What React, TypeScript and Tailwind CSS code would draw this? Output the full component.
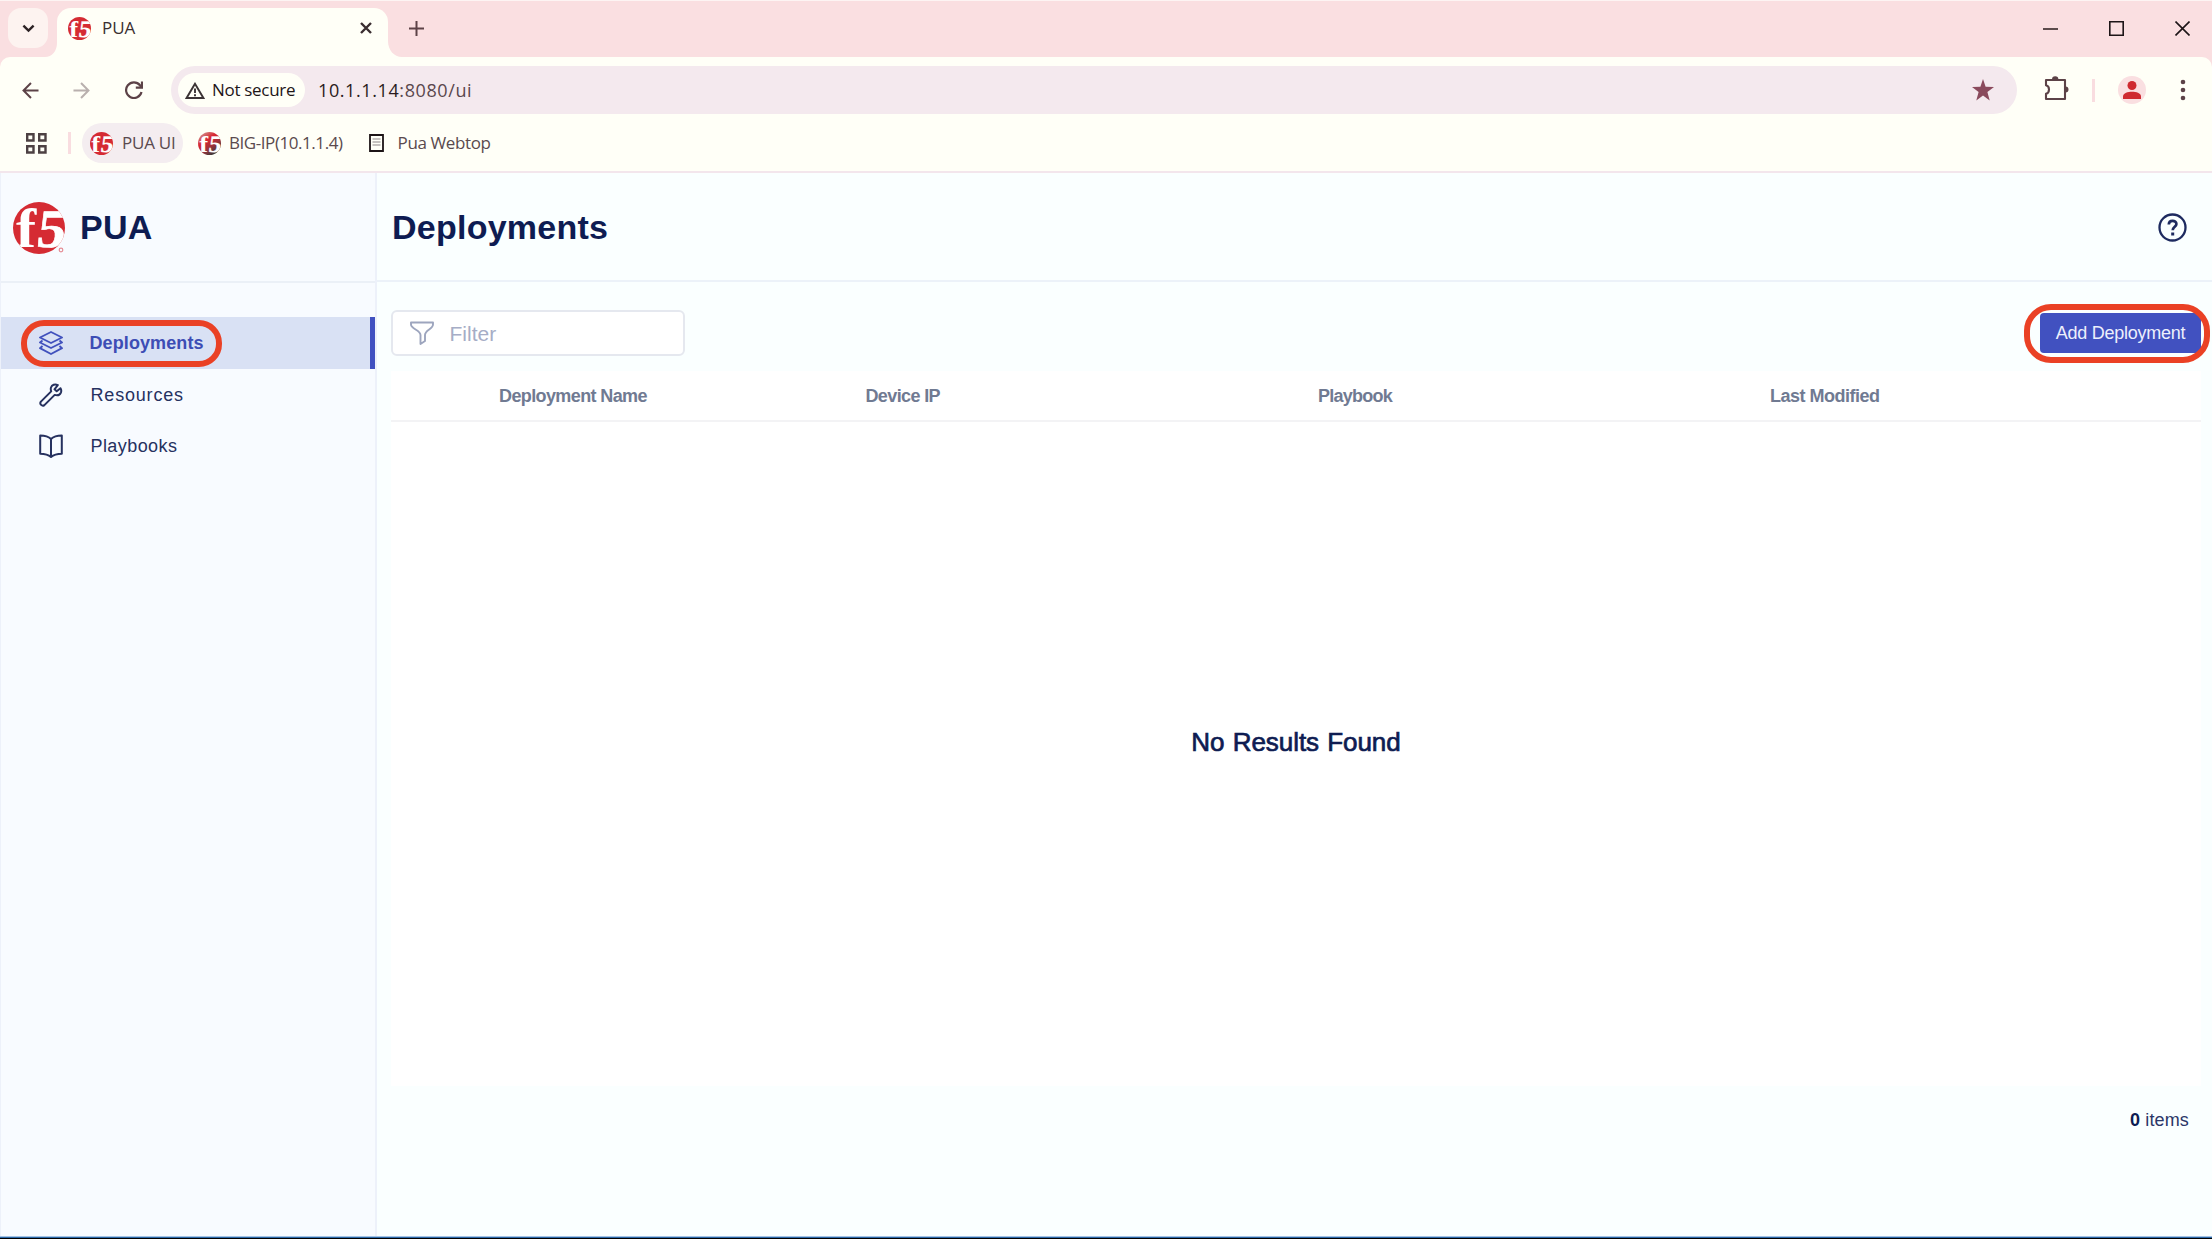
import React from "react";

function F5Logo({ size, shaded = false, mark = false }: { size: number; shaded?: boolean; mark?: boolean }) {
  const id = shaded ? "f5-shaded" : "f5-plain";
  return (
    <svg width={size} height={size} viewBox="0 0 52 52" className="shrink-0 overflow-visible">
      <defs>
        <linearGradient id={id} x1="0.15" y1="0" x2="0.85" y2="1">
          <stop offset="0" stopColor={shaded ? "#cf9a96" : "#d52b33"} />
          <stop offset="0.35" stopColor={shaded ? "#d9242f" : "#d52b33"} />
          <stop offset="0.6" stopColor={shaded ? "#a3323a" : "#d52b33"} />
          <stop offset="0.9" stopColor={shaded ? "#3a3a3a" : "#d52b33"} />
        </linearGradient>
        <clipPath id={id + "-clip"}>
          <circle cx="26" cy="26" r="26" />
        </clipPath>
      </defs>
      <circle cx="26" cy="26" r="26" fill={`url(#${id})`} />
      <g clipPath={`url(#${id}-clip)`} fill="#fff" fontFamily="Liberation Serif, serif" fontWeight="700" fontSize="54">
        <text transform="translate(3 44.500) scale(1.120 1)">f</text>
        <text transform="translate(22.500 44.500) skewX(-7) scale(1.060 1)" stroke="#fff" strokeWidth="0.6">5</text>
      </g>
      {mark && <circle cx="48" cy="48" r="1.8" fill="none" stroke="#e58c95" strokeWidth="1.2" />}
    </svg>
  );
}

function TabStrip() {
  return (
    <div className="flex h-[57px] items-start border-t border-[#fdf4f3] bg-[#fadfe1]">
      <div className="mt-[7px] ml-2 flex h-10 w-10 items-center justify-center rounded-[13px] bg-[#fdf3f0]">
        <svg width="13" height="9" viewBox="0 0 14 9" fill="none" stroke="#2c2224" strokeWidth="2.6">
          <path d="M1.500 1.500 7 6.800l5.500-5.300" />
        </svg>
      </div>
      <div className="relative mt-[7px] ml-[9px] flex h-[49px] w-[331px] items-start rounded-t-[14px] bg-[#fffff7] pt-2">
        <svg className="absolute bottom-0 -left-3" width="12" height="14" viewBox="0 0 12 14">
          <path d="M12 0v14H0C7 14 12 8 12 0z" fill="#fffff7" />
        </svg>
        <svg className="absolute -right-[14px] bottom-0" width="14" height="16" viewBox="0 0 14 16">
          <path d="M0 0v16h14C6 16 0 9 0 0z" fill="#fffff7" />
        </svg>
        <div className="ml-[11px] flex h-6 w-[279px] items-center">
          <F5Logo size={23} />
          <span className="ml-[11px] text-[17px] leading-6 text-[#3a2f31]">PUA</span>
        </div>
        <svg className="mt-[6px] ml-[13px]" width="12" height="12" viewBox="0 0 12 12" fill="none" stroke="#3a2d30" strokeWidth="2.4">
          <path d="m1 1 10 10M11 1 1 11" />
        </svg>
      </div>
      <svg className="mt-5 ml-[21px]" width="15" height="15" viewBox="0 0 15 15" fill="none" stroke="#5c4247" strokeWidth="2">
        <path d="M7.500 0v15M0 7.500h15" />
      </svg>
      <div className="mt-5 mr-[22px] ml-auto flex items-center gap-[51px]">
        <svg width="15" height="15" viewBox="0 0 15 15" stroke="#4a3a3c" strokeWidth="1.8">
          <path d="M0 8h15" />
        </svg>
        <svg width="15" height="15" viewBox="0 0 15 15" fill="none" stroke="#1d1517" strokeWidth="1.600">
          <path d="M.8.8h13.400v13.400H.8z" />
        </svg>
        <svg width="15" height="15" viewBox="0 0 15 15" fill="none" stroke="#1d1517" strokeWidth="1.600">
          <path d="m.5.5 14 14M14.500.5l-14 14" />
        </svg>
      </div>
    </div>
  );
}

function Toolbar() {
  return (
    <div className="bg-[#fadfe1]">
      <div className="flex h-[66px] items-center rounded-t-[10px] bg-[#fffff7]">
        <svg className="ml-[22px]" width="17" height="17" viewBox="0 0 18 18" fill="none" stroke="#5c4247" strokeWidth="2.1">
          <path d="M17.500 9H2M9.500 1 1.600 9l7.900 8" />
        </svg>
        <svg className="ml-[34px]" width="17" height="17" viewBox="0 0 18 18" fill="none" stroke="#b9b0ae" strokeWidth="2.1">
          <path d="M.5 9H16M8.500 1l7.900 8-7.900 8" />
        </svg>
        <svg className="ml-[35px]" width="18" height="18" viewBox="0 0 18 18" fill="none" stroke="#5c4247" strokeWidth="2.2">
          <path d="M16.500 11A7.800 7.800 0 1 1 15 4.300L16.800 6M17 .5v6.200h-6.200" />
        </svg>
        <div className="ml-[28px] flex h-12 w-[1846px] items-center rounded-full bg-[#f4e9ee] pl-[7px]">
          <div className="flex h-[34px] w-[127px] items-center rounded-full bg-[#fffff7] pl-[7px]">
            <svg width="20" height="17" viewBox="0 0 20 17" fill="none" stroke="#3b3335" strokeWidth="1.900">
              <path d="M10 1.800 1.600 16h16.800z" />
              <path d="M10 6.500v4.500M10 12.300v2" />
            </svg>
            <span className="ml-[7px] text-[17px] tracking-[-0.3px] whitespace-nowrap text-[#1d1517]">Not secure</span>
          </div>
          <span className="ml-[13px] text-[18px] tracking-[0.6px] text-[#5a474d]">
            <span className="text-[#2a1b20]">10.1.1.14</span>:8080/ui
          </span>
          <svg className="mr-[23px] ml-auto" width="22" height="22" viewBox="0 0 22 22" fill="#8a4a5c">
            <path d="m11 0 2.600 7.700 8.400.2-6.600 5.100L17.700 21.500 11 16.600 4.300 21.500 6.600 13 0 7.900l8.400-.2z" />
          </svg>
        </div>
        <svg className="mb-[3px] ml-[27px]" width="25" height="25" viewBox="0 0 25 25" fill="none" stroke="#5c4247" strokeWidth="2.100" strokeLinejoin="round">
          <path d="M2 4h19v19H2v-5.200c4-1 4-7.600 0-8.600z" />
          <path d="M8 3.500a3.200 3.200 0 0 1 6.400 0zM21.500 10.500a3 3 0 0 1 0 6z" fill="#5c4247" stroke="none" />
        </svg>
        <div className="ml-[23px] h-[23px] w-[2.500px] bg-[#f9dde0]" />
        <div className="ml-[23px] flex h-7 w-7 items-center justify-center rounded-full bg-[#fadfe1]">
          <svg width="18" height="18" viewBox="0 0 18 18" fill="#cf2a30">
            <circle cx="9" cy="4.500" r="4.500" />
            <path d="M0 18v-2.500C0 12 5 10.700 9 10.700s9 1.300 9 4.800V18z" />
          </svg>
        </div>
        <svg className="ml-[34px]" width="6" height="22" viewBox="0 0 6 22" fill="#5c4247">
          <circle cx="3" cy="3" r="2.300" />
          <circle cx="3" cy="11" r="2.300" />
          <circle cx="3" cy="19" r="2.300" />
        </svg>
      </div>
    </div>
  );
}

function Bookmarks() {
  return (
    <div className="flex h-[50px] items-start border-b-2 border-[#f3e6ec] bg-[#fffff7] text-[17px] leading-none text-[#5a4a4e]">
      <div className="flex h-10 items-center">
        <svg className="ml-[26px]" width="21" height="21" viewBox="0 0 21 21" fill="none" stroke="#4d4143" strokeWidth="2.400">
          <path d="M1.200 1.200h6.300v6.300H1.200zM13.200 1.200h6.300v6.300h-6.300zM1.200 13.200h6.300v6.300H1.200zM13.200 13.200h6.300v6.300h-6.300z" />
        </svg>
        <div className="ml-[21px] h-[22px] w-[2.500px] bg-[#f9dde0]" />
        <div className="ml-[11.500px] flex h-10 w-[101px] items-center rounded-full bg-[#f4edf0] pl-2">
          <F5Logo size={23} />
          <span className="ml-[9px] pb-[2px] tracking-[-0.24px] whitespace-nowrap">PUA UI</span>
        </div>
        <div className="ml-[14.500px] flex items-center">
          <F5Logo size={23} shaded />
          <span className="ml-[8.500px] pb-[2px] tracking-[-0.44px] whitespace-nowrap">BIG-IP(10.1.1.4)</span>
        </div>
        <svg className="ml-[26px]" width="15" height="18" viewBox="0 0 15 18" fill="none">
          <path d="M1 1h13v16H1z" stroke="#1c1416" strokeWidth="1.800" />
          <path d="M3.500 5h8M3.500 8h8M3.500 11h8" stroke="#8d8687" strokeWidth="1.100" />
        </svg>
        <span className="ml-[14px] pb-[2px] tracking-[-0.38px] whitespace-nowrap">Pua Webtop</span>
      </div>
    </div>
  );
}

const navItems = [
  {
    label: "Resources",
    tracking: "tracking-[0.81px]",
    icon: (
      <path d="M21.500 5.200 17.700 8.300 15.500 6.300l3.300-4.200C16 .8 12.900 1.800 12 4.500c-.5 1.500-.2 2.800.2 3.900L1.900 18.600a2.500 2.500 0 0 0 3.500 3.500L15.700 11.900c2.800.9 5.300-.2 6.200-2.300.6-1.500.4-3-.4-4.400z" />
    ),
  },
  {
    label: "Playbooks",
    tracking: "tracking-[0.43px]",
    icon: <path d="M12 5C9.500 2.500 6 1.500 1.200 1.500v18.200c4.500 0 8 .8 10.800 3.300 2.800-2.500 6.300-3.300 10.800-3.300V1.500C18 1.500 14.500 2.500 12 5zM12 5v18" />,
  },
];

function Sidebar() {
  return (
    <aside className="flex w-[377px] shrink-0 flex-col border-r-2 border-l border-[#edf1fa] bg-[#f8fbff]">
      <div className="flex h-[110px] items-center border-b-2 border-[#ebf0f7] pl-3">
        <div className="pt-[2px]">
          <F5Logo size={52} mark />
        </div>
        <h1 className="ml-[15px] text-[34px] leading-none font-bold tracking-[0.2px] text-[#0e1c52]">PUA</h1>
      </div>
      <nav className="mt-[34px] text-[18px] leading-none text-[#26315f]">
        <div className="relative flex h-[52px] items-center border-r-[5px] border-[#4151c0] bg-[#d9e1f4] pl-[38px] font-bold text-[#3d4db5]">
          <svg width="24" height="24" viewBox="0 0 24 24" fill="none" stroke="#4151bd" strokeWidth="1.900" strokeLinejoin="round">
            <path d="M12 1 23 6.500 12 12 1 6.500z" />
            <path d="M3.500 9.500 1 11.500 12 17l11-5.500-2.500-2M3.500 15 1 17.200 12 23l11-5.800-2.500-2.200" />
          </svg>
          <span className="ml-[26.500px] tracking-[0.1px]">Deployments</span>
          <div className="absolute top-[3px] left-5 h-[47px] w-[201px] rounded-[23px] border-[6px] border-[#ea4125]" />
        </div>
        {navItems.map((item) => (
          <div key={item.label} className="flex h-[51.500px] items-center pl-[38px]">
            <svg width="24" height="24" viewBox="0 0 24 24" fill="none" stroke="#26315f" strokeWidth="2" strokeLinejoin="round">
              {item.icon}
            </svg>
            <span className={`ml-[27.500px] ${item.tracking}`}>{item.label}</span>
          </div>
        ))}
      </nav>
    </aside>
  );
}

function DeploymentsPage() {
  return (
    <main className="flex flex-1 flex-col bg-[#faffff] text-[#0e1c52]">
      <header className="flex h-[109px] items-center justify-between border-b-2 border-[#ecf2f9] pr-[25px] pl-[15px]">
        <h2 className="text-[34px] leading-none font-bold tracking-[0.24px]">Deployments</h2>
        <svg className="mt-px" width="29" height="29" viewBox="0 0 29 29" fill="none" stroke="#1d2a5f" strokeWidth="2.300">
          <circle cx="14.500" cy="14.500" r="13" />
          <path d="M10.800 11.500c0-5 7.600-4.700 7.600-.6 0 2.700-3.700 2.900-3.700 6.300" strokeWidth="2.700" />
          <path d="M13.200 19.500h3v3h-3z" fill="#1d2a5f" stroke="none" />
        </svg>
      </header>
      <div className="mt-[28px] flex h-[46px] items-center justify-between pr-[11px] pl-[14px]">
        <div className="flex h-[46px] w-[294px] items-center rounded-md border-2 border-[#e5e8ef] bg-white pl-[16.500px]">
          <svg width="24" height="24" viewBox="0 0 24 24" fill="none" stroke="#9da5be" strokeWidth="1.900" strokeLinejoin="round">
            <path d="M1 1.500h22v2c0 4.500-8 5.500-8 10.500V20l-4.500 3v-9C10.500 9 1 8 1 3.500z" />
          </svg>
          <span className="ml-[16px] text-[21px] leading-none text-[#a6adc6]">Filter</span>
        </div>
        <button className="relative h-10 w-[161px] rounded-[4px] bg-[#4151c0] text-[18px] leading-none tracking-[-0.24px] text-[#eceffc]">
          Add Deployment
          <span className="absolute -top-[9px] -left-4 h-[59px] w-[186px] rounded-[27px] border-[6px] border-[#ea4125]" />
        </button>
      </div>
      <section className="mt-[15px] mr-[11px] ml-[14px] flex h-[715px] flex-col bg-white">
        <div className="grid h-[51px] shrink-0 grid-cols-[366.500px_452.500px_452px_1fr] items-center border-b-2 border-[#f3f3f5] pl-[108px] text-[18px] leading-none font-bold text-[#707a92]">
          <span className="tracking-[-0.61px]">Deployment Name</span>
          <span className="tracking-[-0.63px]">Device IP</span>
          <span className="tracking-[-0.76px]">Playbook</span>
          <span className="tracking-[-0.5px]">Last Modified</span>
        </div>
        <div className="flex flex-1 justify-center pt-[307px] text-[26px] leading-none tracking-[-0.05px] [word-spacing:1px] [-webkit-text-stroke:0.7px_#0e1c52]">
          No Results Found
        </div>
      </section>
      <div className="mt-[25px] mr-[23px] text-right text-[18px] leading-none tracking-[0.15px] text-[#2b3768]">
        <b className="text-[#0e1c52]">0</b> items
      </div>
    </main>
  );
}

export default function App() {
  return (
    <div className="flex h-[1239px] w-[2212px] flex-col overflow-hidden bg-[#f8fbff] font-['Open_Sans',sans-serif]">
      <TabStrip />
      <Toolbar />
      <Bookmarks />
      <div className="flex min-h-0 flex-1 font-['Liberation_Sans',Arial,sans-serif]">
        <Sidebar />
        <DeploymentsPage />
      </div>
      <div className="h-px bg-[#a5c3e3]" />
      <div className="h-px bg-[#2a67a8]" />
      <div className="h-px bg-black" />
    </div>
  );
}
